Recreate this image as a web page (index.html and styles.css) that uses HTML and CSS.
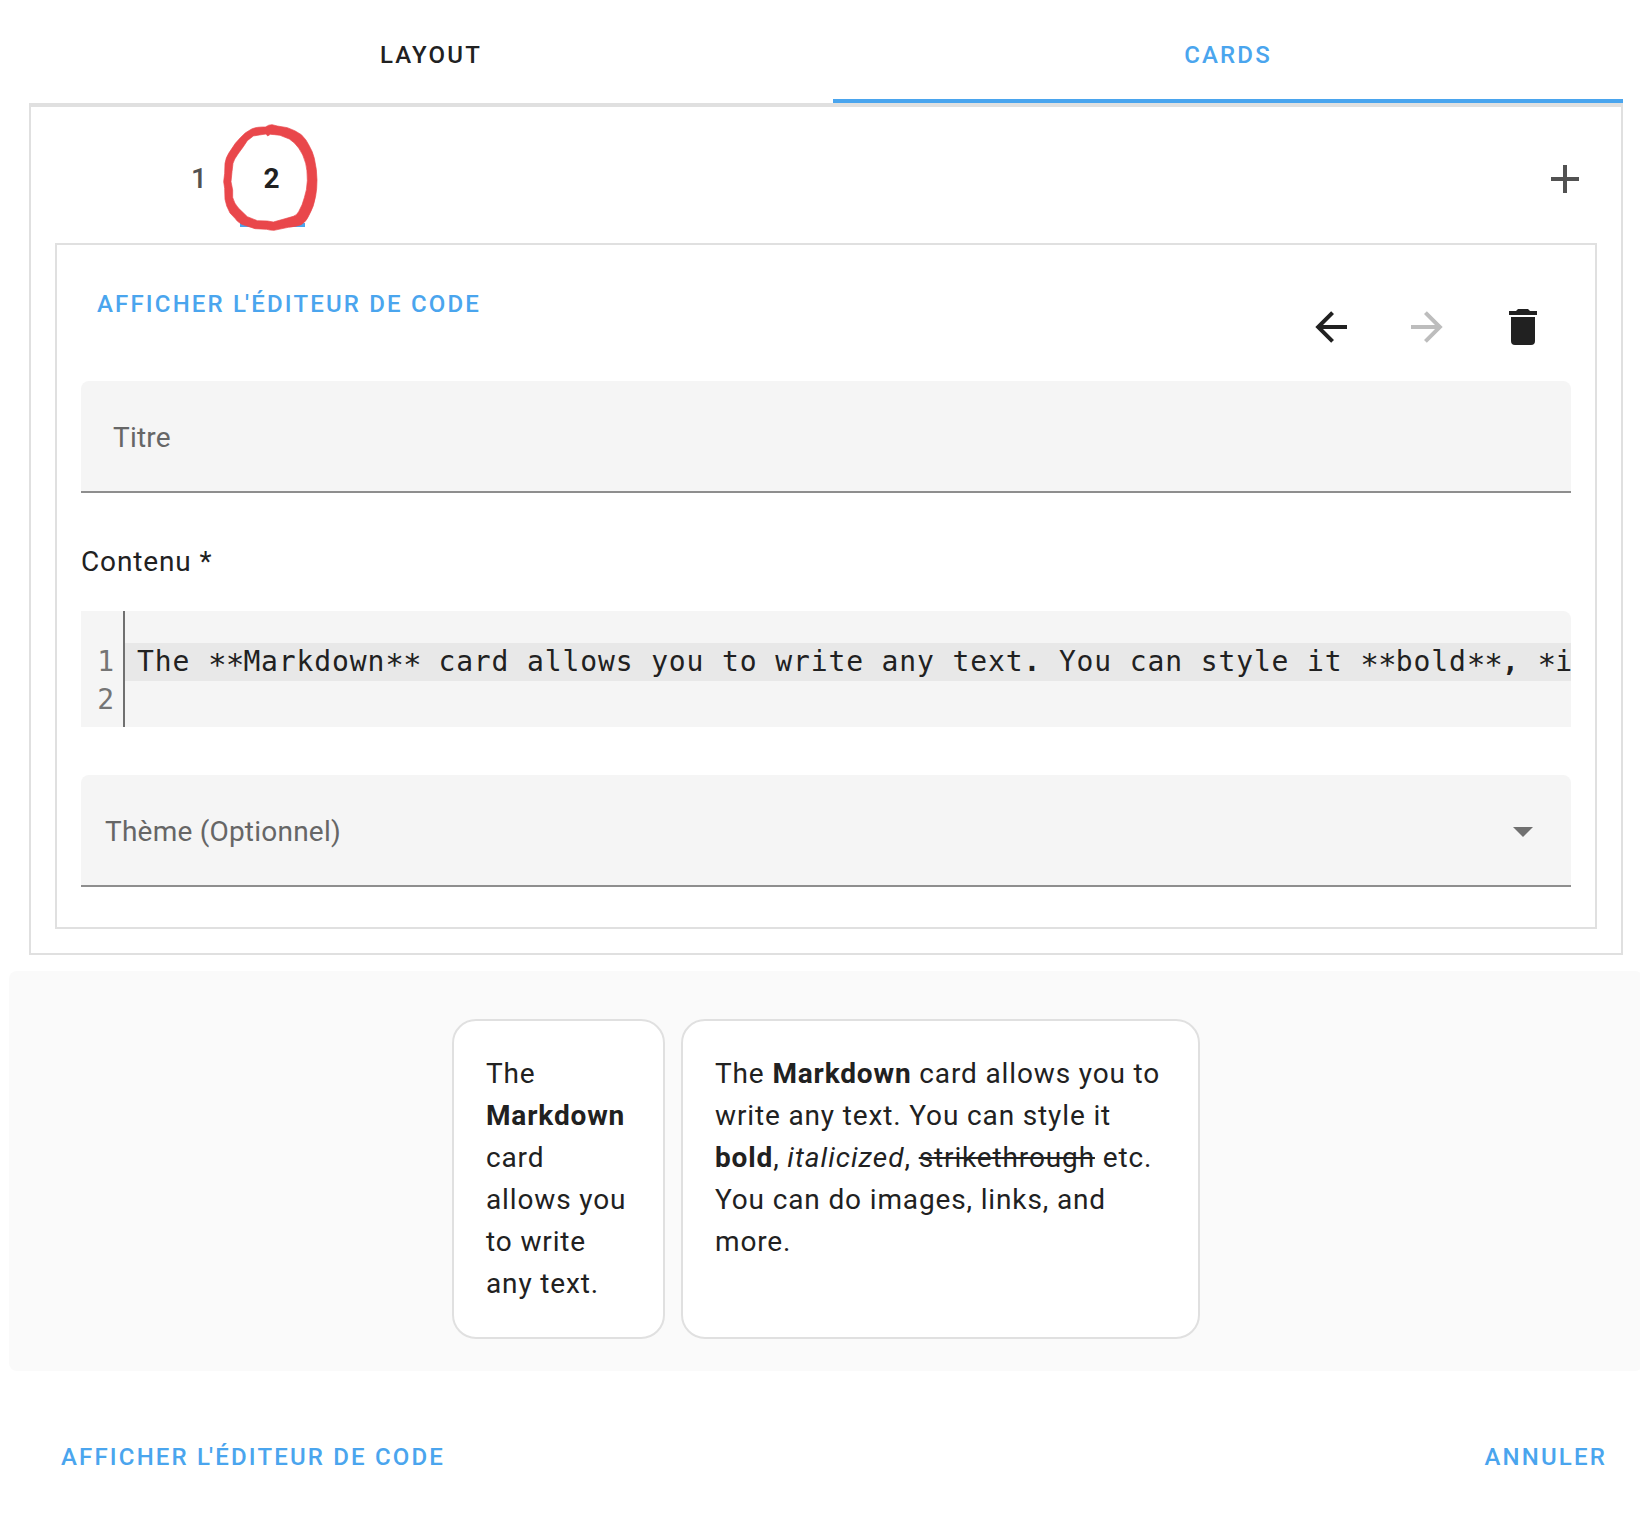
FILE: index.html
```html
<!DOCTYPE html>
<html lang="fr">
<head>
<meta charset="utf-8">
<title>Cards</title>
<link rel="stylesheet" href="styles.css">
</head>
<body>
<main class="dialog">
  <nav class="tabs">
    <div class="tab tab-layout">Layout</div>
    <div class="tab tab-cards">Cards</div>
  </nav>
  <section class="editor">
    <div class="toolbar">
      <div class="card-tab">1</div>
      <div class="card-tab active">2
        <svg class="marker" viewBox="0 0 600 420"><path fill="#e9474b" stroke="#e9474b" stroke-width="2" fill-rule="evenodd" d="M318 50Q326 44 336 44L352 48L382 53Q406 61 424 74Q440 90 446 104Q458 124 463 145Q471 180 471 210Q471 238 467 258Q462 290 447 316Q440 334 424 344Q412 349 385 352L342 361Q330 361 320 358L285 356L245 343Q230 334 225 325L210 309Q198 288 195 268L194 235L191 215L194 190L195 160Q198 142 206 130L226 100L241 83Q256 66 275 57Q290 50 318 51ZM318 72L298 75L280 78L262 92L250 110L234 132Q222 148 219 160L216 185L213 215L218 240V262Q222 280 236 295L262 320L292 332L322 333L340 336L372 327L400 319Q411 315 416 305Q428 284 433 263Q441 240 442 212Q442 178 437 160Q430 133 416 114Q405 98 388 87L360 76L344 74L331 73L323 78Z"/></svg>
      </div>
      <div class="add"><svg class="icon" viewBox="0 0 24 24"><path d="M19,13H13V19H11V13H5V11H11V5H13V11H19V13Z"/></svg></div>
    </div>
    <div class="card-editor">
      <div class="card-head">
        <div class="button head-button">Afficher <span class="tight">l</span>'éditeur de code</div>
        <div class="actions">
          <div class="action"><svg class="icon" viewBox="0 0 24 24"><path d="M20,11V13H8L13.5,18.5L12.08,19.92L4.16,12L12.08,4.08L13.5,5.5L8,11H20Z"/></svg></div>
          <div class="action disabled"><svg class="icon" viewBox="0 0 24 24"><path d="M4,11V13H16L10.5,18.5L11.92,19.92L19.84,12L11.92,4.08L10.5,5.5L16,11H4Z"/></svg></div>
          <div class="action"><svg class="icon" viewBox="0 0 24 24"><path d="M19,4H15.5L14.5,3H9.5L8.5,4H5V6H19M6,19A2,2 0 0,0 8,21H16A2,2 0 0,0 18,19V7H6V19Z"/></svg></div>
        </div>
      </div>
      <div class="field title-field">Titre</div>
      <div class="label">Contenu *</div>
      <div class="code">
        <div class="gutter"><div>1</div><div>2</div></div>
        <div class="lines"><div class="line current">The <span class="star">**</span>Markdown<span class="star">**</span> card allows you to write any text<b>.</b> You can style it <span class="star">**</span>bold<span class="star">**</span><b>,</b> <span class="star">*</span>i</div><div class="line"></div></div>
      </div>
      <div class="field theme-field"><span class="theme-label">Thème (Optionnel)</span><svg class="icon" viewBox="0 0 24 24"><path d="M7,10L12,15L17,10H7Z"/></svg></div>
    </div>
  </section>
  <section class="preview">
    <article class="card small">The <b>Markdown</b> card allows you to write any text.</article>
    <article class="card large">The <b>Markdown</b> card allows you to write any text. You can style it <b>bold</b>, <em>italicized</em>, <s>strikethrough</s> etc. You can do images, links, and more.</article>
  </section>
  <footer class="footer">
    <div class="button">Afficher <span class="tight">l</span>'éditeur de code</div>
    <div class="button">Annuler</div>
  </footer>
</main>
</body>
</html>
```
FILE: styles.css
```css
* { box-sizing: border-box; }
body {
  margin: 0;
  background: #fff;
  color: #212121;
  font: 400 28px/42px Roboto, "Liberation Sans", sans-serif;
  letter-spacing: 0.86px;
  -webkit-font-smoothing: antialiased;
  overflow: hidden;
}
.dialog { height: 1522px; padding-top: 7px; overflow: hidden; }
.icon { display: block; width: 48px; height: 48px; fill: currentColor; }

.tabs {
  display: flex;
  margin: 0 17px 0 29px;
  height: 98px;
  border-bottom: 2px solid #e0e0e0;
}
.tab, .button {
  font-size: 24px;
  font-weight: 500;
  letter-spacing: 2.17px;
  text-transform: uppercase;
  white-space: nowrap;
}
.tab { line-height: 96px; text-align: center; }
.tab-layout { width: 804px; }
.tab-cards { width: 790px; color: #4aa5ee; box-shadow: inset 0 -4px #4aa5ee; }
.button { color: #4aa5ee; line-height: 72px; }
.tight { letter-spacing: -0.9px; }

.editor {
  margin: 0 17px 0 29px;
  height: 850px;
  padding: 24px;
  border: 2px solid #e0e0e0;
}
.toolbar {
  display: flex;
  height: 96px;
  margin-bottom: 16px;
  padding-left: 112px;
  color: #525252;
}
.card-tab {
  position: relative;
  width: 65px;
  margin-right: 8px;
  line-height: 96px;
  text-align: center;
  font-weight: 500;
}
.card-tab.active {
  padding-right: 1px;
  color: #212121;
  font-weight: 700;
  box-shadow: inset 0 -4px #4aa5ee;
}
.marker { position: absolute; left: -80px; top: -21px; width: 200px; height: 140px; }
.add { margin: 24px 8px 0 auto; }

.card-editor { height: 686px; padding: 0 24px; border: 2px solid #e0e0e0; }
.card-head { display: flex; justify-content: space-between; height: 136px; }
.head-button { padding: 23px 0 0 16px; }
.actions { display: flex; padding-top: 34px; }
.action { padding: 24px; height: 96px; }
.disabled { color: #bdbdbd; }

.field {
  height: 112px;
  border-bottom: 2px solid #8e8e8e;
  border-radius: 8px 8px 0 0;
  background: #f5f5f5;
  color: #666;
  line-height: 114px;
  letter-spacing: 0.22px;
}
.title-field { padding-left: 32px; }
.theme-field {
  display: flex;
  justify-content: space-between;
  align-items: center;
  margin-top: 48px;
  padding: 2px 24px 0;
}
.theme-label { padding-top: 2px; line-height: 42px; }
.theme-field .icon { color: #707070; }
.label { margin: 48px 0 28px; }
.code {
  display: flex;
  height: 116px;
  border-top-right-radius: 8px;
  background: #f5f5f5;
  font-family: "DejaVu Sans Mono", monospace;
  line-height: 38px;
  letter-spacing: 0.87px;
  overflow: hidden;
}
.gutter {
  flex: none;
  width: 44px;
  padding: 32px 8px 0 0;
  border-right: 2px solid #707070;
  color: #757575;
  text-align: right;
}
.lines { flex: 1; min-width: 0; padding-top: 32px; }
.line { height: 38px; padding-left: 12px; white-space: pre; overflow: hidden; }
.current { background: #e8e8e8; }
.star {
  font-size: 31px;
  line-height: 0;
  letter-spacing: -0.93px;
  vertical-align: -4px;
}

.preview {
  display: flex;
  justify-content: center;
  gap: 16px;
  width: 1634px;
  height: 400px;
  margin: 16px 0 0 9px;
  padding: 48px 0 32px;
  border-radius: 8px;
  background: #fafafa;
}
.card {
  padding: 32px;
  border: 2px solid #e0e0e0;
  border-radius: 24px;
  background: #fff;
}
.card em { letter-spacing: 0.99px; }
.small { width: 213px; }
.large { width: 519px; }
.footer {
  display: flex;
  justify-content: space-between;
  padding: 50px 33px 0 61px;
}
```
